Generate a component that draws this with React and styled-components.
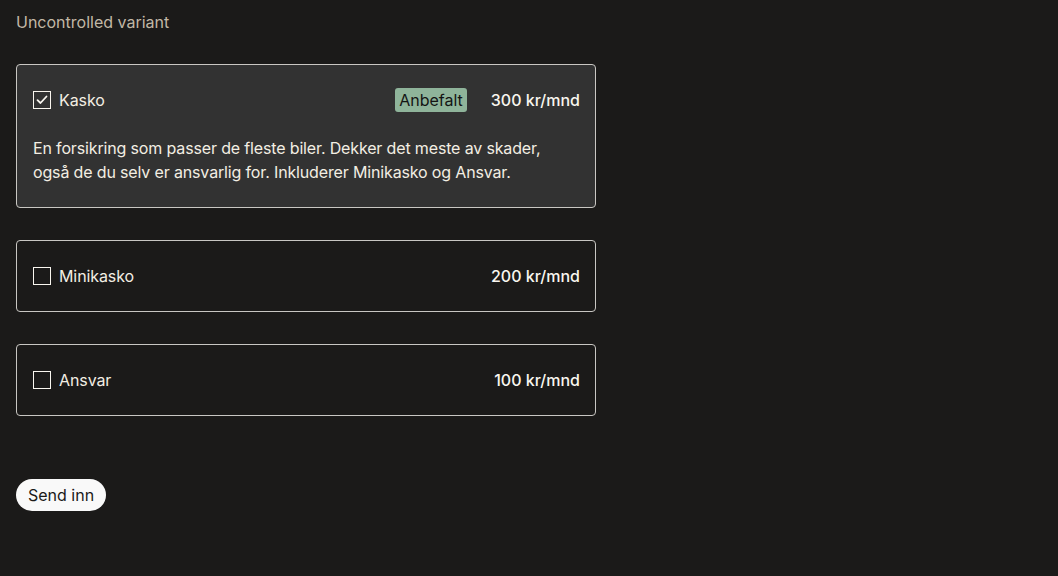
import React from 'react';
import styled, { createGlobalStyle } from 'styled-components';

const GlobalStyle = createGlobalStyle`
  body {
    margin: 0;
    background: #1b1a19;
    font-family: Inter, "Noto Sans", sans-serif;
    color: #f9f6ef;
  }
`;

const Page = styled.div`
  padding: 12px 16px 16px;
  min-height: 548px;
`;

const Title = styled.h2`
  margin: 0 0 32px;
  font-size: 16px;
  line-height: 20px;
  font-weight: 400;
  color: #c2b8a6;
`;

const List = styled.div`
  display: flex;
  flex-direction: column;
  gap: 32px;
  width: 580px;
`;

const Card = styled.label`
  display: block;
  box-sizing: border-box;
  padding: 23px 15px 23px 16px;
  border: 1px solid #c9c7c3;
  border-radius: 4px;
  background: ${(p) => (p.$checked ? '#323232' : 'transparent')};
  cursor: pointer;
`;

const Header = styled.div`
  display: flex;
  align-items: center;
  height: 24px;
`;

const Box = styled.span`
  box-sizing: border-box;
  width: 18px;
  height: 18px;
  border: 1.5px solid #f9f6ef;
  display: flex;
  align-items: center;
  justify-content: center;
  margin-right: 8px;
  flex-shrink: 0;
`;

const Label = styled.span`
  font-size: 16px;
  flex: 1;
  color: #f3eee3;
  letter-spacing: -0.1px;
`;

const Badge = styled.span`
  background: #8fb49a;
  color: #141414;
  font-size: 16px;
  line-height: 24px;
  padding: 0 4px;
  border-radius: 3px;
  margin-right: 24px;
`;

const Price = styled.span`
  font-size: 16px;
  font-weight: 500;
  color: #f9f6ef;
`;

const Desc = styled.p`
  margin: 24px 0 0;
  font-size: 16px;
  line-height: 24px;
  color: #f3eee3;
  max-width: 520px;
  letter-spacing: -0.15px;
`;

const Button = styled.button`
  margin-top: 63px;
  background: #f9f9f9;
  color: #1b1a19;
  border: none;
  border-radius: 16px;
  height: 32px;
  padding: 0 12px;
  font-family: Inter, "Noto Sans", sans-serif;
  font-size: 16px;
  cursor: pointer;
`;

const Check = () => (
  <svg width="12" height="10" viewBox="0 0 12 10" fill="none">
    <path d="M1.5 5.2 L4.5 8 L10.5 1.5" stroke="#f9f6ef" strokeWidth="1.8" strokeLinecap="round" strokeLinejoin="round" />
  </svg>
);

const options = [
  {
    name: 'Kasko',
    price: '300 kr/mnd',
    checked: true,
    badge: 'Anbefalt',
    desc: 'En forsikring som passer de fleste biler. Dekker det meste av skader, også de du selv er ansvarlig for. Inkluderer Minikasko og Ansvar.',
  },
  { name: 'Minikasko', price: '200 kr/mnd' },
  { name: 'Ansvar', price: '100 kr/mnd' },
];

export default function App() {
  return (
    <Page>
      <GlobalStyle />
      <Title>Uncontrolled variant</Title>
      <List>
        {options.map((o) => (
          <Card key={o.name} $checked={o.checked}>
            <Header>
              <Box>{o.checked && <Check />}</Box>
              <Label>{o.name}</Label>
              {o.badge && <Badge>{o.badge}</Badge>}
              <Price>{o.price}</Price>
            </Header>
            {o.desc && <Desc>{o.desc}</Desc>}
          </Card>
        ))}
      </List>
      <Button>Send inn</Button>
    </Page>
  );
}
